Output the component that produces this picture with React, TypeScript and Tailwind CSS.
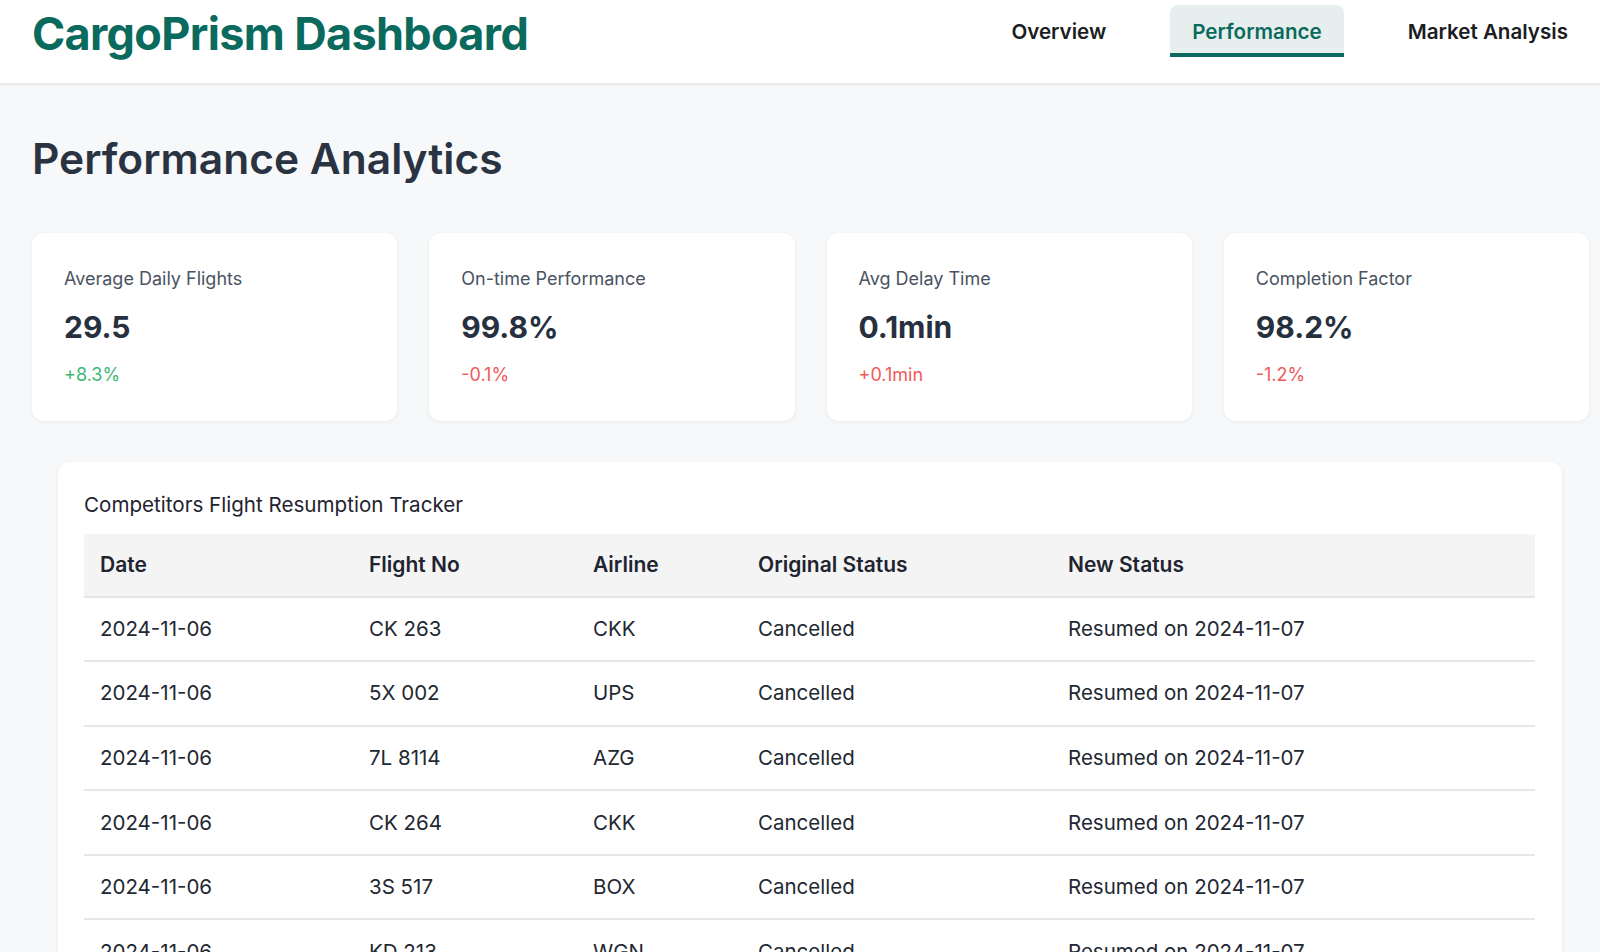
import React from 'react';

const stats = [
  { label: 'Average Daily Flights', value: '29.5', change: '+8.3%', good: true },
  { label: 'On-time Performance', value: '99.8%', change: '-0.1%', good: false },
  { label: 'Avg Delay Time', value: '0.1min', change: '+0.1min', good: false },
  { label: 'Completion Factor', value: '98.2%', change: '-1.2%', good: false },
];

const rows = [
  ['2024-11-06', 'CK 263', 'CKK', 'Cancelled', 'Resumed on 2024-11-07'],
  ['2024-11-06', '5X 002', 'UPS', 'Cancelled', 'Resumed on 2024-11-07'],
  ['2024-11-06', '7L 8114', 'AZG', 'Cancelled', 'Resumed on 2024-11-07'],
  ['2024-11-06', 'CK 264', 'CKK', 'Cancelled', 'Resumed on 2024-11-07'],
  ['2024-11-06', '3S 517', 'BOX', 'Cancelled', 'Resumed on 2024-11-07'],
  ['2024-11-06', 'KD 213', 'WGN', 'Cancelled', 'Resumed on 2024-11-07'],
];

const columns = [
  { title: 'Date', width: 'w-[269px]' },
  { title: 'Flight No', width: 'w-[224px]' },
  { title: 'Airline', width: 'w-[165px]' },
  { title: 'Original Status', width: 'w-[310px]' },
  { title: 'New Status', width: 'w-[483px]' },
];

const tabs = ['Overview', 'Performance', 'Market Analysis'];

const App: React.FC = () => {
  return (
    <div className="h-[952px] overflow-hidden bg-[#f7f8fa] font-['Inter',sans-serif]">
      {/* Header */}
      <header className="h-[84px] bg-white shadow-[0_1px_3px_rgba(0,0,0,0.08)] border-b border-[#e9eaec] flex items-start justify-between pl-8 pr-[10px]">
        <h1 className="pt-[11px] text-[45px] leading-none font-bold tracking-[-0.015em] text-[#0b6a5e]">
          CargoPrism Dashboard
        </h1>
        <nav className="mt-[5px] flex gap-[42px]">
          {tabs.map((tab) => {
            const active = tab === 'Performance';
            return (
              <button
                key={tab}
                className={
                  active
                    ? 'px-[22px] pt-[13px] pb-[7px] text-[20.6px] leading-7 font-semibold text-[#0b6a5e] bg-[#e7efee] rounded-t-lg border-b-4 border-[#0b6a5e]'
                    : 'px-[22px] pt-[13px] pb-[7px] text-[20.6px] leading-7 font-semibold text-[#1a1d21] border-b-4 border-transparent'
                }
              >
                {tab}
              </button>
            );
          })}
        </nav>
      </header>

      <main className="pl-8 pt-[54px]">
        <h2 className="text-[42.5px] leading-none font-semibold text-[#2a3342]">
          Performance Analytics
        </h2>

        {/* Stat cards */}
        <div className="mt-[52px] w-[1557px] grid grid-cols-4 gap-8">
          {stats.map((s) => (
            <div key={s.label} className="bg-white rounded-xl shadow-[0_1px_4px_rgba(0,0,0,0.06)] px-8 py-8">
              <p className="text-lg leading-7 text-[#4a5361]">{s.label}</p>
              <p className="mt-4 text-3xl leading-9 font-bold text-[#27303e]">{s.value}</p>
              <p className={`mt-4 text-lg leading-7 ${s.good ? 'text-[#3bb873]' : 'text-[#ef5a5a]'}`}>
                {s.change}
              </p>
            </div>
          ))}
        </div>

        {/* Tracker table */}
        <div className="mt-[41px] ml-[26px] w-[1504px] bg-white rounded-xl shadow-[0_1px_4px_rgba(0,0,0,0.06)] pt-[29px] px-[26px] pb-6">
          <h3 className="text-[20.6px] leading-7 text-[#1f2430]">Competitors Flight Resumption Tracker</h3>
          <table className="mt-[15px] w-[1451px] table-fixed border-collapse">
            <thead>
              <tr className="bg-[#f4f4f5] border-b-2 border-[#e4e5e7]">
                {columns.map((c) => (
                  <th
                    key={c.title}
                    className={`${c.width} px-4 py-[17px] text-left text-[21px] leading-7 font-semibold text-[#1f2430]`}
                  >
                    {c.title}
                  </th>
                ))}
              </tr>
            </thead>
            <tbody>
              {rows.map((r, i) => (
                <tr key={i} className="border-b-2 border-[#e6e7e9]">
                  {r.map((cell, j) => (
                    <td key={j} className="px-4 py-[17.3px] text-[20.5px] leading-7 text-[#222832]">
                      {cell}
                    </td>
                  ))}
                </tr>
              ))}
            </tbody>
          </table>
        </div>
      </main>
    </div>
  );
};

export default App;
